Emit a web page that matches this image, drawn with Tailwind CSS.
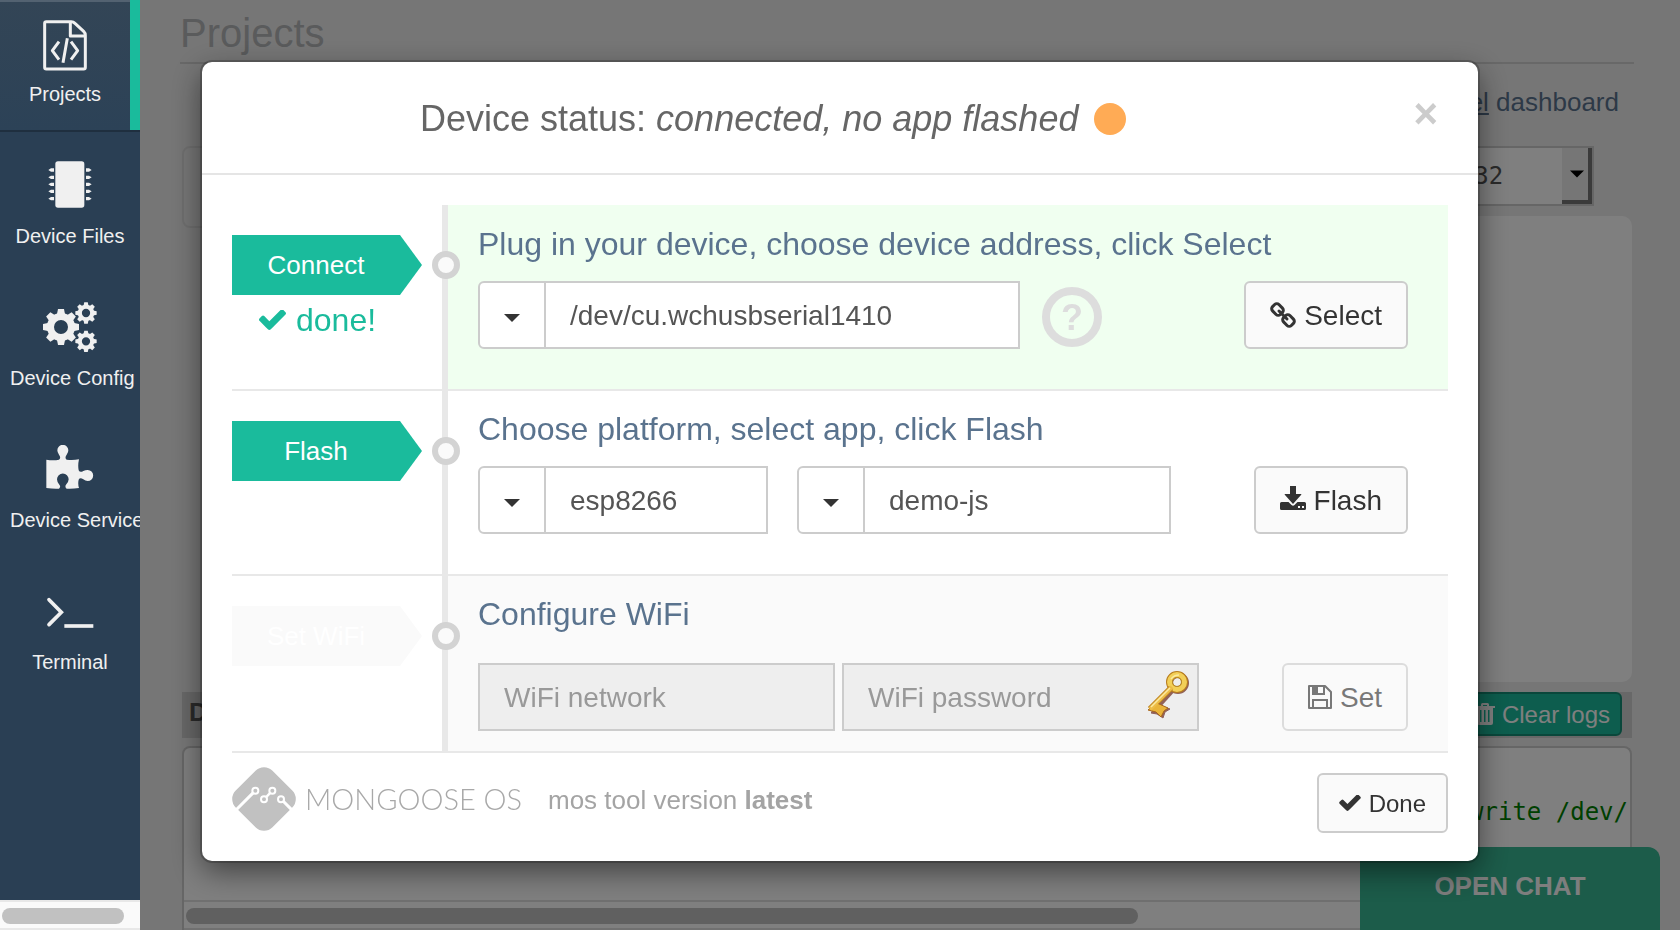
<!DOCTYPE html>
<html lang="en">
<head>
<meta charset="utf-8">
<title>Projects</title>
<script src="https://cdn.jsdelivr.net/npm/@tailwindcss/browser@4"></script>
</head>
<body class="h-screen overflow-hidden bg-[#ededed] font-['Liberation_Sans',Arial,sans-serif] text-[#555]">
<svg class="hidden" aria-hidden="true">
  <symbol id="check" viewBox="121 374 1550 1148"><path fill="currentColor" d="M1671 566q0 40-28 68l-724 724-136 136q-28 28-68 28t-68-28l-136-136-362-362q-28-28-28-68t28-68l136-136q28-28 68-28t68 28l294 295 656-657q28-28 68-28t68 28l136 136q28 28 28 68z"/></symbol>
  <symbol id="gear" viewBox="-18 -18 36 36" overflow="visible">
    <circle r="10.5" fill="none" stroke="currentColor" stroke-width="7"/>
    <g fill="currentColor">
      <path id="tooth" d="M-4.200-12L-3-18H3L4.200-12Z"/>
      <use href="#tooth" transform="rotate(45)"/><use href="#tooth" transform="rotate(90)"/><use href="#tooth" transform="rotate(135)"/><use href="#tooth" transform="rotate(180)"/><use href="#tooth" transform="rotate(225)"/><use href="#tooth" transform="rotate(270)"/><use href="#tooth" transform="rotate(315)"/>
    </g>
  </symbol>
  <symbol id="caret" viewBox="0 0 16 8"><path fill="currentColor" d="M0 0H16L8 8Z"/></symbol>
</svg>

<div class="flex h-full">
  <!-- Sidebar -->
  <nav class="relative z-30 flex w-[140px] shrink-0 flex-col overflow-hidden bg-[#2a3f54] text-[20px] leading-[30px] text-[#f0f0f0]">
    <div class="flex flex-1 flex-col gap-3">
      <a href="#projects" class="flex h-[130px] flex-col items-center gap-2 border-r-[10px] border-[#1abb9c] bg-linear-to-b from-[#334556] to-[#2c4257] pt-[19px] shadow-[0_2px_0_rgba(0,0,0,.25),inset_0_2px_0_rgba(255,255,255,.16)]">
        <svg class="h-[52px] w-[50px] shrink-0" viewBox="120 57 150 156" fill="none" stroke="currentColor" stroke-width="9" stroke-linejoin="round"><path d="M139 65H214Q220 65 225 70L251 94Q256 99 256 106V202Q256 207 251 207H139Q134 207 134 202V70Q134 65 139 65Z"/><path d="M211 65V108H256"/><path d="M177 125L157 152L177 179M213 125L233 152L213 179M202 115L189 188"/></svg>
        <span class="whitespace-nowrap">Projects</span>
      </a>
      <a href="#files" class="flex h-[130px] flex-col gap-2 pt-[19px]">
        <svg class="h-[52px] w-[50px] shrink-0 self-center" viewBox="135 483 150 156" fill="currentColor"><rect x="166" y="484" width="87" height="139" rx="8"/>
          <path d="M145 510l8-5h9v10h-9zM145 532l8-5h9v10h-9zM145 553l8-5h9v10h-9zM145 574l8-5h9v10h-9zM145 596l8-5h9v10h-9zM275 510l-8-5h-9v10h9zM275 532l-8-5h-9v10h9zM275 553l-8-5h-9v10h9zM275 574l-8-5h-9v10h9zM275 596l-8-5h-9v10h9z"/></svg>
        <span class="w-max min-w-full px-[10px] text-center whitespace-nowrap">Device Files</span>
      </a>
      <a href="#config" class="flex h-[130px] flex-col gap-2 pt-[19px]">
        <svg class="h-[52px] w-[50px] shrink-0 self-center overflow-visible" viewBox="135 909 150 156"><use href="#gear" x="129" y="927" width="108" height="108"/><use href="#gear" x="226" y="907" width="64" height="64"/><use href="#gear" x="226" y="992" width="64" height="64"/></svg>
        <span class="w-max min-w-full px-[10px] text-center whitespace-nowrap">Device Config</span>
      </a>
      <a href="#service" class="flex h-[130px] flex-col gap-2 pt-[19px]">
        <svg class="h-[52px] w-[50px] shrink-0 self-center" viewBox="135 282 150 156" fill="currentColor"><path d="M139 326Q160 329 177 326Q184 321 177 311Q172 305 172 298A16 16 0 0 1 205 298Q205 305 200 311Q193 321 200 326Q218 329 237 325Q233 343 236 358Q240 366 250 360Q256 357 263 357A16 16 0 0 1 263 390Q256 390 250 385Q240 378 236 386Q233 398 237 411Q218 414 200 413Q193 407 199 400Q206 392 206 385A17 17 0 0 0 171 385Q171 392 177 400Q184 407 177 413Q160 414 139 411Z"/></svg>
        <span class="w-max min-w-full px-[10px] text-center whitespace-nowrap">Device Services</span>
      </a>
      <a href="#terminal" class="flex h-[130px] flex-col gap-2 pt-[19px]">
        <svg class="h-[52px] w-[50px] shrink-0 self-center" viewBox="135 711 150 156" fill="none" stroke="currentColor" stroke-width="11"><path stroke-linecap="round" d="M147 749L184 787L147 824"/><path d="M193 828H280"/></svg>
        <span class="w-max min-w-full px-[10px] text-center whitespace-nowrap">Terminal</span>
      </a>
    </div>
    <div class="h-[30px] border-y-2 border-[#e8e8e8] bg-[#fafafa] pt-[6px] pl-[2px]"><div class="h-4 w-[122px] rounded-full bg-[#c1c1c1]"></div></div>
  </nav>

  <!-- Page under the dialog -->
  <main class="flex min-w-0 flex-1 flex-col pt-[9px] pr-[46px] pl-10">
    <h1 class="border-b-2 border-[#d0d0d0] pb-[5px] text-[40px] leading-[48px] text-[#b4b6b8]">Projects</h1>
    <p class="mt-5 pr-[15px] text-right text-[26px] leading-[36px] text-[#5a738e]"><a href="#panel" class="underline">panel</a> dashboard</p>
    <div class="mx-[2px] mt-[26px] flex">
      <div class="h-[82px] flex-1 rounded-[8px] border-2 border-[#dedede]"></div>
      <div class="w-[60%]">
        <div class="flex justify-end pr-[38px]">
          <div class="relative">
            <select aria-label="Platform" class="h-[60px] w-[189px] appearance-none border-2 border-[#ccc] bg-white pl-6 font-['DejaVu_Sans_Mono',monospace] text-[24px] text-[#555]"><option>ESP32</option></select>
            <div class="pointer-events-none absolute top-[2px] right-[2px] flex h-[56px] w-[30px] items-center justify-center border-r-4 border-b-4 border-[#777] bg-[#ececec] pl-[3px] text-black"><svg class="h-2 w-[14px]"><use href="#caret"/></svg></div>
          </div>
        </div>
        <div class="mt-[10px] h-[466px] rounded-[10px] bg-white"></div>
      </div>
    </div>
    <div class="mx-[2px] mt-[10px] flex h-[46px] items-start justify-between bg-[#d0d0d0] pr-[10px] pl-[7px]">
      <h2 class="text-[26px] leading-[40px] font-bold text-[#555]">Device logs</h2>
      <button class="flex h-11 items-center gap-[7px] rounded-[6px] border-2 border-[#148f77] bg-[#1abb9c] pr-[10px] pl-3 text-[24px] text-white">
        <svg class="h-[22px] w-5" viewBox="0 0 20 22" fill="currentColor"><path fill-rule="evenodd" d="M6 3V1.500Q6 0 7.500 0H12.500Q14 0 14 1.500V3H20V5H18V20Q18 22 16 22H4Q2 22 2 20V5H0V3ZM8 3H12V2H8ZM5 7V19H6.500V7ZM9 7V19H10.500V7ZM13 7V19H14.500V7Z"/></svg>
        <span class="pt-[2px]">Clear logs</span></button>
    </div>
    <div class="mx-[2px] mt-2 flex flex-1 flex-col overflow-hidden rounded-t-[8px] border-2 border-b-0 border-[#ccc] bg-white">
      <pre class="flex-1 pt-[46px] pr-[2px] text-right font-['DejaVu_Sans_Mono',monospace] text-[24px] leading-[36px] text-[#008000]">write /dev/</pre>
      <div class="h-[30px] border-y-2 border-[#e0e0e0] pt-[6px] pr-[492px] pl-[2px]"><div class="h-4 rounded-full bg-[#c0c0c0]"></div></div>
    </div>
  </main>
</div>
<button class="fixed right-5 bottom-0 h-[83px] w-[300px] rounded-tr-[12px] bg-[#38b894] pb-1 text-[26px] font-bold text-[#fdfdfd]">OPEN CHAT</button>

<!-- Dialog -->
<div class="fixed inset-0 z-20 bg-black/50 px-[202px] pt-[62px]">
  <section role="dialog" aria-labelledby="status" class="rounded-[10px] bg-white shadow-[0_0_0_2px_rgba(0,0,0,.2),0_10px_30px_rgba(0,0,0,.5)]">
    <header class="flex h-[113px] items-center justify-between border-b-2 border-[#e5e5e5] pt-[2px] pr-10 pl-[218px]">
      <h2 id="status" class="flex items-center gap-4 text-[36px] leading-[50px] whitespace-nowrap text-[#666]"><span>Device status: <em>connected, no app flashed</em></span><span class="size-8 rounded-full bg-[#ffab55]"></span></h2>
      <button aria-label="Close" class="pb-[10px] text-[42px] leading-[42px] font-bold text-[#ccc]">×</button>
    </header>

    <div class="px-[30px] pt-[30px]">
      <div class="grid grid-cols-[210px_6px_1fr] border-b-2 border-[#e8e8e8]">
        <div class="pt-[30px]">
          <div class="flex h-[60px] w-[190px] items-center justify-center bg-[#1abb9c] pr-[22px] text-[26px] text-white [clip-path:polygon(0_0,168px_0,190px_50%,168px_100%,0_100%)]">Connect</div>
          <div class="flex items-center gap-[10px] pl-[27px] text-[32px] leading-[50px] text-[#1abb9c]"><svg class="h-5 w-[27px]"><use href="#check"/></svg>done!</div>
        </div>
        <div class="relative -mb-[2px] bg-[#e8e8e8]"><span class="absolute top-[46px] -left-[10px] size-7 rounded-full border-[6px] border-[#d3d3d3] bg-[#fafafa]"></span></div>
        <div class="bg-[#f0fff0] pt-[19px] pr-10 pb-10 pl-[30px]">
          <h3 class="text-[32px] leading-[40px] text-[#5a738e]">Plug in your device, choose device address, click Select</h3>
          <div class="mt-[17px] flex items-center">
            <div class="flex h-[68px] w-[542px]">
              <button aria-label="Choose address" class="flex w-[68px] shrink-0 items-center justify-center rounded-l-[6px] border-2 border-[#ccc] bg-white pt-[6px] text-[#333]"><svg class="h-2 w-4"><use href="#caret"/></svg></button>
              <input aria-label="Device address" value="/dev/cu.wchusbserial1410" class="-ml-[2px] min-w-0 flex-1 border-2 border-[#ccc] bg-white px-6 pt-[2px] text-[28px] text-[#555]">
            </div>
            <button aria-label="Help" class="mt-1 ml-[22px] flex size-[60px] items-center justify-center rounded-full border-[8px] border-[#ddd] pt-[2px] text-[36px] leading-[36px] font-bold text-[#ddd]">?</button>
            <button class="ml-auto flex h-[68px] items-center gap-2 rounded-[6px] border-2 border-[#ccc] bg-[#fafafa] px-6 text-[28px] text-[#333]">
              <svg class="size-[26px]" viewBox="0 0 26 26" fill="none" stroke="currentColor" stroke-width="3"><rect x="-5.500" y="-4.500" width="11" height="9" rx="3" transform="translate(7.500 7.500) rotate(45)"/><rect x="-5.500" y="-4.500" width="11" height="9" rx="3" transform="translate(18.500 18.500) rotate(45)"/><path stroke-linecap="round" d="M9 9L17 17"/></svg>
              <span class="pt-[2px]">Select</span></button>
          </div>
        </div>
      </div>

      <div class="grid grid-cols-[210px_6px_1fr] border-b-2 border-[#e8e8e8]">
        <div class="pt-[30px]">
          <div class="flex h-[60px] w-[190px] items-center justify-center bg-[#1abb9c] pr-[22px] text-[26px] text-white [clip-path:polygon(0_0,168px_0,190px_50%,168px_100%,0_100%)]">Flash</div>
        </div>
        <div class="relative -mb-[2px] bg-[#e8e8e8]"><span class="absolute top-[46px] -left-[10px] size-7 rounded-full border-[6px] border-[#d3d3d3] bg-[#fafafa]"></span></div>
        <div class="pt-[18px] pr-10 pb-10 pl-[30px]">
          <h3 class="text-[32px] leading-[40px] text-[#5a738e]">Choose platform, select app, click Flash</h3>
          <div class="mt-[17px] flex items-center">
            <div class="flex h-[68px] w-[290px]">
              <button aria-label="Choose platform" class="flex w-[68px] shrink-0 items-center justify-center rounded-l-[6px] border-2 border-[#ccc] bg-white pt-[6px] text-[#333]"><svg class="h-2 w-4"><use href="#caret"/></svg></button>
              <input aria-label="Platform name" value="esp8266" class="-ml-[2px] min-w-0 flex-1 border-2 border-[#ccc] bg-white px-6 pt-[2px] text-[28px] text-[#555]">
            </div>
            <div class="ml-[29px] flex h-[68px] w-[374px]">
              <button aria-label="Choose app" class="flex w-[68px] shrink-0 items-center justify-center rounded-l-[6px] border-2 border-[#ccc] bg-white pt-[6px] text-[#333]"><svg class="h-2 w-4"><use href="#caret"/></svg></button>
              <input aria-label="App name" value="demo-js" class="-ml-[2px] min-w-0 flex-1 border-2 border-[#ccc] bg-white px-6 pt-[2px] text-[28px] text-[#555]">
            </div>
            <button class="ml-auto flex h-[68px] items-center gap-2 rounded-[6px] border-2 border-[#ccc] bg-[#fafafa] px-6 text-[28px] text-[#333]">
              <svg class="mb-1 h-6 w-[26px]" viewBox="0 0 26 24" fill="currentColor"><path d="M10 0H16V8H21Q22 8 21 9L13 18L5 9Q4 8 5 8H10Z"/><path fill-rule="evenodd" d="M1.500 16H8.500L11.500 19Q13 20.500 14.500 19L17.500 16H24.500Q26 16 26 17.500V22.500Q26 24 24.500 24H1.500Q0 24 0 22.500V17.500Q0 16 1.500 16ZM18 20V22H20V20ZM22 20V22H24V20Z"/></svg>
              <span class="pt-[2px]">Flash</span></button>
          </div>
        </div>
      </div>

      <div class="grid grid-cols-[210px_6px_1fr] border-b-2 border-[#e8e8e8]">
        <div class="pt-[30px]">
          <div class="flex h-[60px] w-[190px] items-center justify-center bg-[#fafafa] pr-[22px] text-[26px] text-white [clip-path:polygon(0_0,168px_0,190px_50%,168px_100%,0_100%)]">Set WiFi</div>
        </div>
        <div class="relative bg-[#e8e8e8]"><span class="absolute top-[46px] -left-[10px] size-7 rounded-full border-[6px] border-[#d3d3d3] bg-[#fafafa]"></span></div>
        <div class="bg-[#fafafa] pt-[18px] pr-10 pb-5 pl-[30px]">
          <h3 class="text-[32px] leading-[40px] text-[#5a738e]">Configure WiFi</h3>
          <div class="mt-[29px] flex items-center gap-[7px]">
            <input aria-label="WiFi network" disabled placeholder="WiFi network" class="h-[68px] w-[357px] border-2 border-[#ccc] bg-[#eee] px-6 pt-[2px] text-[28px] placeholder:text-[#999]">
            <div class="relative">
              <input aria-label="WiFi password" type="password" disabled placeholder="WiFi password" class="h-[68px] w-[357px] border-2 border-[#ccc] bg-[#eee] px-6 pt-[2px] text-[28px] placeholder:text-[#999]">
              <svg class="absolute top-2 right-[10px] h-12 w-[42px]" viewBox="0 0 42 48" fill="none">
                <g transform="translate(1 1)" stroke="#7a3f34" opacity=".8"><circle cx="30" cy="11" r="8" stroke-width="6"/><path stroke-width="6" d="M24 18L4 40"/><path fill="#7a3f34" d="M11 33L22 37L17 40L15 46L9 42L3 41Z"/></g>
                <circle cx="30" cy="11" r="7.500" stroke="#b87d1c" stroke-width="7"/>
                <circle cx="30" cy="11" r="7.500" stroke="#f2cf58" stroke-width="5"/>
                <circle cx="30" cy="11" r="4.500" stroke="#b98a2c"/>
                <path stroke="#b87d1c" stroke-width="6" d="M24 17L3 38"/>
                <path fill="#e9b43a" stroke="#a8661c" d="M10 32L21 37L17 40L14 46L9 41L1 39Z"/>
                <path stroke="#edbd48" stroke-width="4" d="M25 16L3 38"/>
                <path stroke="#fbe9a0" stroke-width="1.500" d="M23 17L4 36M24 8Q27 4 32 4"/>
              </svg>
            </div>
            <button disabled class="ml-auto flex h-[68px] items-center gap-2 rounded-[6px] border-2 border-[#ccc] bg-[#fafafa] px-6 text-[28px] text-[#333] opacity-65">
              <svg class="size-6" viewBox="0 0 24 24" fill="none" stroke="currentColor" stroke-width="2"><path stroke-linejoin="round" d="M1 1H17L23 7V23H1Z"/><path d="M5 1V9H16V1M5 23V15H19V23"/><path fill="currentColor" stroke="none" d="M5 1H10V9H5Z"/></svg>
              <span class="pt-[2px]">Set</span></button>
          </div>
        </div>
      </div>

      <footer class="flex h-[108px] pt-[14px]">
        <svg class="size-16" viewBox="36 80 192 192" aria-hidden="true">
          <rect x="54" y="98" width="156" height="156" rx="36" transform="rotate(45 132 176)" fill="#c1c1c1"/>
          <g stroke="#fff" fill="none"><path stroke-width="9" d="M45 212L100 157M189 182L220 213"/><path stroke-width="7" d="M137 172L152 156"/>
          <g stroke-width="6" fill="#c1c1c1"><circle cx="106" cy="151" r="9"/><circle cx="132" cy="177" r="9"/><circle cx="157" cy="151" r="9"/><circle cx="183" cy="177" r="9"/></g></g>
        </svg>
        <span class="ml-[9px] w-[217px] font-[Lato] text-[29px] leading-[64px] font-light whitespace-nowrap text-[#a8a8a8]">MONGOOSE OS</span>
        <p class="ml-[26px] text-[26px] leading-[66px] text-[#a4a4a4]">mos tool version <b>latest</b></p>
        <button class="mt-[6px] ml-auto flex h-[60px] items-center gap-2 rounded-[6px] border-2 border-[#ccc] bg-[#fafafa] px-5 text-[24px] text-[#333]"><svg class="h-4 w-[22px]"><use href="#check"/></svg><span class="pt-[2px]">Done</span></button>
      </footer>
    </div>
  </section>
</div>
</body>
</html>
